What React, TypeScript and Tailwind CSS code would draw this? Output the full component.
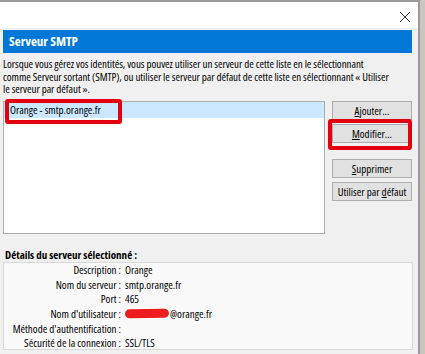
import React from "react";

const font = { fontFamily: '"Open Sans", "Noto Sans", sans-serif' };

function Btn({ children, className = "" }: { children: React.ReactNode; className?: string }) {
  return (
    <div
      className={
        "flex h-[19px] w-[80px] items-center justify-center border border-[#adadad] bg-[#e1e1e1] text-[11px] text-black " +
        className
      }
    >
      {children}
    </div>
  );
}

const details: [string, React.ReactNode][] = [
  ["Description :", "Orange"],
  ["Nom du serveur :", "smtp.orange.fr"],
  ["Port :", "465"],
  [
    "Nom d'utilisateur :",
    <span className="flex items-center">
      <span className="mr-[1px] inline-block h-[9px] w-[44px] -rotate-1 rounded-full bg-[#ee1c1c]" />
      @orange.fr
    </span>,
  ],
  ["Méthode d'authentification :", ""],
  ["Sécurité de la connexion :", "SSL/TLS"],
];

export default function App() {
  return (
    <div className="flex h-[354px] w-[425px] bg-[#c9c6bd] font-stretch-[86%]" style={font}>
      <div className="flex h-full w-[420px] flex-col overflow-hidden border-r-2 border-t-2 border-[#9a9a9a] bg-[#f0f0f0] text-black">
        {/* title strip */}
        <div className="flex h-[26px] shrink-0 items-center justify-end bg-white pr-[7px]">
          <svg width="12" height="12" viewBox="0 0 12 12" className="mt-[4px]">
            <path d="M1 1 L11 11 M11 1 L1 11" stroke="#333" strokeWidth="1" />
          </svg>
        </div>

        <div className="flex flex-col pl-[3px] pr-[6px]">
          <div className="mt-[2px] flex h-[23px] w-[409px] items-center bg-[#0078d7] pl-[6px] text-[13px] font-bold leading-none text-white">
            Serveur SMTP
          </div>

          <div className="mt-[5px] flex flex-col whitespace-nowrap text-[11px] tracking-[-0.05px]">
            <div className="h-[12.5px] leading-[12.5px]">
              Lorsque vous gérez vos identités, vous pouvez utiliser un serveur de cette liste en le sélectionnant
            </div>
            <div className="h-[12.5px] leading-[12.5px]">
              comme Serveur sortant (SMTP), ou utiliser le serveur par défaut de cette liste en sélectionnant « Utiliser
            </div>
            <div className="h-[12.5px] leading-[12.5px]">le serveur par défaut ».</div>
          </div>

          <div className="mt-[5px] flex">
            {/* list */}
            <div className="relative h-[133px] w-[322px] border border-[#adadad] bg-white">
              <div className="flex h-[16px] items-center bg-[#cce8ff] pl-[6px] text-[11px] leading-none">
                Orange - smtp.orange.fr
              </div>
              <div className="absolute left-[1px] top-[-3px] h-[25px] w-[117px] rounded-[3px] border-[4px] border-[#e3000f]" />
            </div>

            {/* buttons */}
            <div className="ml-[7px] flex flex-col leading-none">
              <Btn>
                <span>
                  <u>A</u>jouter...
                </span>
              </Btn>
              <div className="relative mt-[4px]">
                <Btn>
                  <span>
                    <u>M</u>odifier...
                  </span>
                </Btn>
                <div className="absolute left-[-4px] top-[-5px] h-[31px] w-[84px] rounded-[3px] border-[4px] border-[#e3000f]" />
              </div>
              <Btn className="mt-[16px]">
                <span>
                  <u>S</u>upprimer
                </span>
              </Btn>
              <Btn className="mt-[4px]">
                <span>
                  Utiliser par <u>d</u>éfaut
                </span>
              </Btn>
            </div>
          </div>

          <div className="mt-[15px] pl-[2px] text-[11px] font-bold leading-none">Détails du serveur sélectionné :</div>

          <div className="mt-[2px] h-[88px] w-[410px] overflow-hidden border border-[#d9d9d9] bg-[#f9f9f9] text-[11px] leading-none">
            {details.map(([k, v]) => (
              <div key={k} className="flex h-[14.6px] items-center">
                <span className="w-[117px] shrink-0 text-right">{k}</span>
                <span className="pl-[4px]">{v}</span>
              </div>
            ))}
          </div>
        </div>
      </div>
    </div>
  );
}
